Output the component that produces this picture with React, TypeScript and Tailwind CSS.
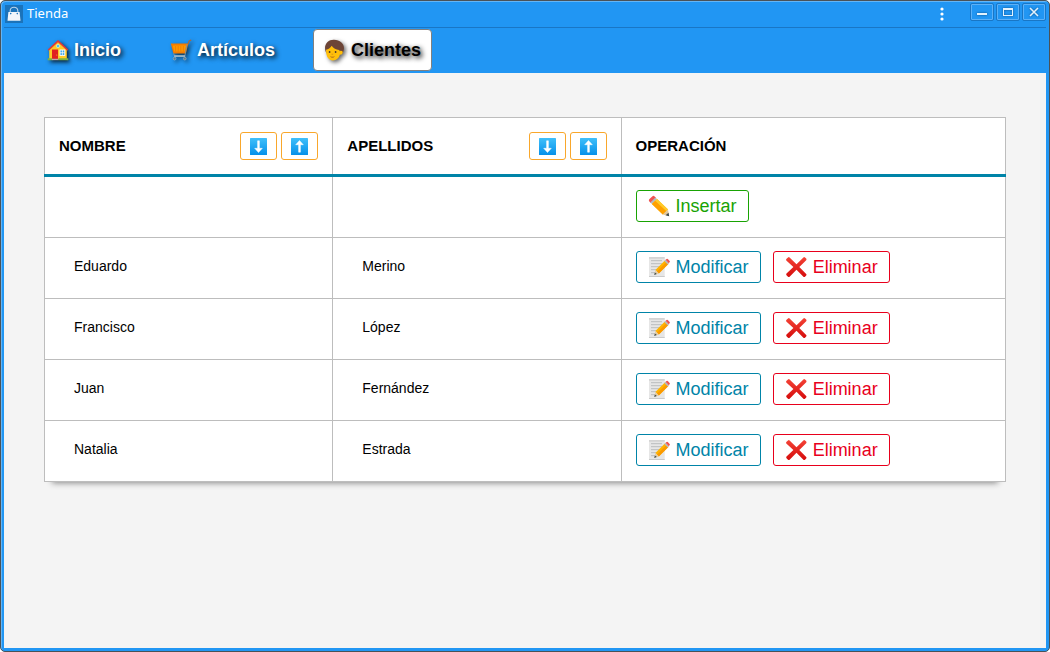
import type { ReactNode } from 'react';

const TitleBag = () => (
  <svg viewBox="0 0 18 18" className="size-[18px] shrink-0" aria-hidden="true">
    <rect width="18" height="18" fill="#1b73ba" />
    <path d="M5.2 9V5.5a3.8 3.3 0 0 1 7.6 0V9" fill="none" stroke="#b9d5ec" strokeWidth="1.1" />
    <path d="M3.4 7h11.2l.9 8.8h-13z" fill="#f1f5fa" />
    <circle cx="5.7" cy="8.6" r=".8" fill="#1b73ba" />
    <circle cx="12.3" cy="8.6" r=".8" fill="#1b73ba" />
  </svg>
);

const House = () => (
  <svg viewBox="0 0 22 22" className="size-[22px] shrink-0 drop-shadow-[2px_2px_2px_rgba(0,0,0,0.8)]" aria-hidden="true">
    <path d="M2.2 10.5 11 2.2l8.8 8.3v9.7H2.2z" fill="#ffca28" />
    <path d="M.8 10.6 11 .9l10.2 9.7-.9 1.2L11 3.2l-9.3 8.6z" fill="#e53935" />
    <rect x="5" y="10.5" width="6" height="9.5" fill="#e02020" />
    <circle cx="9.8" cy="16" r=".5" fill="#ffca28" />
    <circle cx="11" cy="7" r="1.7" fill="#4fc3f7" stroke="#fff3c4" strokeWidth=".6" />
    <rect x="13" y="11" width="4.8" height="5.4" fill="#3ba5e8" stroke="#fff" strokeWidth=".9" />
    <path d="M15.4 11v5M13 13.7h4.6" stroke="#fff" strokeWidth=".7" />
    <path d="M.7 19.3h4.5v1.9H.7zM11.5 19.3h9.8v1.9h-9.8z" fill="#7cb342" />
    <path d="M5 19.8h6.5v1.4H5z" fill="#bcaaa4" />
  </svg>
);

const Cart = () => (
  <svg viewBox="0 0 22 22" className="size-[22px] shrink-0 drop-shadow-[2px_2px_2px_rgba(0,0,0,0.65)]" aria-hidden="true">
    <path d="M.8 4.4h17.4l-2.3 10H3.4z" fill="#f57c00" />
    <path d="M2.8 6.6h13.4l-1.4 6H4.2z" fill="#ff9800" />
    <path d="M5.6 7v5.6M8.2 7v5.6M10.8 7v5.6M13.4 7v5.6" stroke="#ef7a00" strokeWidth=".8" />
    <path d="M18 5.4 19.3 1.8l1.9-.6" fill="none" stroke="#a9673c" strokeWidth="1.3" />
    <path d="M16.8 5.5 14.9 16.8H4.3l-.7-2.4" fill="none" stroke="#7d93a0" strokeWidth=".9" />
    <path d="M4.2 17.1h11" stroke="#cfd8dc" strokeWidth="1.1" />
    <circle cx="4.6" cy="19.6" r="1.4" fill="#607d8b" stroke="#b0bec5" strokeWidth=".5" />
    <circle cx="14.8" cy="19.6" r="1.4" fill="#607d8b" stroke="#b0bec5" strokeWidth=".5" />
  </svg>
);

const Person = () => (
  <svg viewBox="0 0 22 22" className="size-[22px] shrink-0 drop-shadow-[2px_2px_2px_rgba(0,0,0,0.6)]" aria-hidden="true">
    <path d="M1.6 12.6C-.6 5.6 3.9.6 10 .8c6.6 0 10.9 4.6 9.8 9.9-.3 1.9-1 3.3-2.3 4.3L3 14.6z" fill="#6d4537" />
    <path d="M2 10.8c2.3-.4 4.3-1.9 5.7-4 1.8 2.4 4.3 3.9 7.4 4.2l.8 1.2c1.2-1 3.2-.2 2.8 1.5-.3 1.4-1.6 2.2-2.8 1.9-.9 3.6-3.6 5.8-7 5.8-4.2 0-6.9-3.7-6.9-10.6z" fill="#ffbf0a" />
    <ellipse cx="5.6" cy="13" rx=".9" ry="1.1" fill="#46342d" />
    <ellipse cx="11.6" cy="13" rx=".9" ry="1.1" fill="#46342d" />
    <path d="M6.1 17.2c1.5.8 3.2.8 4.7 0-.8 1.8-3.9 1.8-4.7 0z" fill="#8d4a25" />
    <path d="M7.5 15.2h1.7" stroke="#d58c14" strokeWidth=".8" />
  </svg>
);

const SortArrow = ({ up = false }: { up?: boolean }) => (
  <svg viewBox="0 0 17 17" className="size-[17px]" aria-hidden="true">
    <defs>
      <linearGradient id="key" x1="0" y1="0" x2="0" y2="1">
        <stop offset="0" stopColor="#40c0fa" />
        <stop offset="1" stopColor="#0590ea" />
      </linearGradient>
    </defs>
    <rect width="17" height="17" rx=".6" fill="url(#key)" />
    <path
      d={up ? 'M8.5 2.5 12.3 6.7H9.4v7.5H7.6V6.7H4.7z' : 'M8.5 14.5 12.3 10.3H9.4V2.8H7.6v7.5H4.7z'}
      fill="#fff"
      stroke="#fff"
      strokeWidth=".5"
      strokeLinejoin="round"
    />
  </svg>
);

const Pencil = () => (
  <svg viewBox="0 0 22 22" className="size-[22px] shrink-0" aria-hidden="true">
    <path d="M1.2 4.3 4.5 1.2q1.2-.8 2.1.2L8 2.8 2.8 8 1.3 6.4q-1-1 0-2.1z" fill="#ef5350" />
    <path d="m7.4 2.4 1.6 1.5-5.1 5.2-1.6-1.6z" fill="#b4babd" />
    <path d="m9 3.9 11 10.6-5.2 5L3.9 9z" fill="#ffb300" />
    <path d="m7.4 5.5 11 10.6-3.6 3.4L3.9 9z" fill="#ffa000" />
    <path d="m7.2 5.7 1.9-1.8 11 10.6-1.6 1.8z" fill="#ffca28" />
    <path d="m20 14.4 1.2 6.8-6.5-1.7z" fill="#e2c79b" />
    <path d="m20.5 17.7.7 3.5-3.6-1z" fill="#37474f" />
  </svg>
);

const Memo = () => (
  <svg viewBox="0 0 22 22" className="size-[22px] shrink-0" aria-hidden="true">
    <path d="M1 1.4h15.7v19.4H1z" fill="#e6e6e6" />
    <path d="M1 1.2h15.7v1.2H1zM1 20h15.7v.9H1z" fill="#cacaca" />
    <path d="M3 4.7h11M3 7.7h11M3 10.7h9M3 13.7h6M3 16.7h4" stroke="#b5b8ba" strokeWidth=".9" />
    <path d="m16.9 4.5 3.5 3.4-9.6 9.5-3.4-3.3z" fill="#ffb300" />
    <path d="m18.5 6 1.9 1.9-9.6 9.5L9 15.6z" fill="#fb9900" />
    <path d="m7.4 14.1 3.4 3.3-4.4 1.4z" fill="#e5cda3" />
    <path d="m6.9 16.4 1.9 1.7-2.6.8z" fill="#37474f" />
    <path d="m16.3 5 1.2-1.2 3.4 3.4-1.2 1.2z" fill="#b4babd" />
    <path d="m17.5 3.8 1.1-.9q.6-.4 1.2.2l1.8 1.8q.6.6.1 1.2l-.9 1.1z" fill="#ef5350" />
  </svg>
);

const Cross = () => (
  <svg viewBox="0 0 22 22" className="size-[22px] shrink-0" aria-hidden="true">
    <defs>
      <linearGradient id="cross" x1="0" y1="0" x2="0" y2="1">
        <stop offset="0" stopColor="#f44336" />
        <stop offset="1" stopColor="#d50b0b" />
      </linearGradient>
    </defs>
    <path
      d="M1.3 3.1 3 1.4q.8-.7 1.6 0L11.5 8.3l6.9-6.9q.8-.7 1.6 0l1.2 1.2q.7.8 0 1.6L14.3 11l6.9 6.9q.7.8 0 1.6L20 20.7q-.8.7-1.6 0l-6.9-6.9-6.9 6.9q-.8.7-1.6 0l-1.5-1.5q-.7-.8 0-1.6L8.4 11 1.3 4.4q-.5-.6 0-1.3z"
      fill="url(#cross)"
    />
  </svg>
);

const navItem =
  'flex h-[42px] items-center gap-[5px] rounded border px-[10px] text-lg font-bold';

function NavLink({ icon, label, active = false }: { icon: ReactNode; label: string; active?: boolean }) {
  return (
    <a
      href="#"
      aria-current={active ? 'page' : undefined}
      className={
        active
          ? `${navItem} border-[#808080] bg-white text-black [text-shadow:2px_2px_5px_#000000]`
          : `${navItem} border-transparent text-white [text-shadow:2px_2px_5px_#000000]`
      }
    >
      {icon}
      {label}
    </a>
  );
}

function WindowButton({ label, children }: { label: string; children: ReactNode }) {
  return (
    <button
      type="button"
      aria-label={label}
      className="flex h-[18px] w-6 items-center justify-center rounded-xs border border-[#1976c5] shadow-[inset_0_0_0_1px_#5cb1f8]"
    >
      <svg viewBox="0 0 12 10" className="h-[10px] w-3 drop-shadow-[0_0_1px_#0d4f8b]" fill="none" stroke="#e3f2fd" aria-hidden="true">
        {children}
      </svg>
    </button>
  );
}

function HeaderCell({ label }: { label: string }) {
  return (
    <th scope="col" className="w-[30%] border border-b-3 border-[#bdbdbd] border-b-[#0084a8] px-[14px]">
      <div className="flex items-center justify-between">
        {label}
        <span className="flex gap-1">
          <SortButton label={`${label} descendente`} />
          <SortButton label={`${label} ascendente`} up />
        </span>
      </div>
    </th>
  );
}

function SortButton({ label, up = false }: { label: string; up?: boolean }) {
  return (
    <button
      type="button"
      aria-label={label}
      className="flex h-7 w-[37px] items-center justify-center rounded-[3px] border border-[#f9a72b]"
    >
      <SortArrow up={up} />
    </button>
  );
}

const action = 'flex h-8 items-center gap-[6px] rounded-[3px] border px-[11px] text-lg';
const cell = 'border border-[#bdbdbd]';

const clients = [
  { name: 'Eduardo', surname: 'Merino' },
  { name: 'Francisco', surname: 'López' },
  { name: 'Juan', surname: 'Fernández' },
  { name: 'Natalia', surname: 'Estrada' },
];

export default function App() {
  return (
    <div className="min-h-screen bg-white font-['Liberation_Sans',Arial,sans-serif] text-black">
      <div className="flex min-h-screen flex-col rounded-[5px] border border-[#4a5257] bg-[#2196f3] px-[3px] pb-[3px] shadow-[inset_1px_1px_0_#64b5f6]">
        <header className="flex h-[27px] items-center border-b border-[#1976c5] pl-px">
          <TitleBag />
          <h1 className="ml-1 font-['Noto_Sans',sans-serif] text-[13px] text-white">Tienda</h1>
          <button type="button" aria-label="Menú" className="ml-auto mr-6 flex h-5 w-2 items-center justify-center">
            <svg viewBox="0 0 4 14" className="h-[14px] w-1" fill="#fff" aria-hidden="true">
              <circle cx="2" cy="2" r="1.6" />
              <circle cx="2" cy="7" r="1.6" />
              <circle cx="2" cy="12" r="1.6" />
            </svg>
          </button>
          <div className="mb-1 flex gap-[2px]">
            <WindowButton label="Minimizar">
              <path d="M1 7h10" strokeWidth="2" />
            </WindowButton>
            <WindowButton label="Maximizar">
              <path d="M1 2h10" strokeWidth="2" />
              <rect x="1.5" y="1.5" width="9" height="7" />
            </WindowButton>
            <WindowButton label="Cerrar">
              <path d="m2 1 8 8M10 1 2 9" strokeWidth="1.6" />
            </WindowButton>
          </div>
        </header>

        <nav className="flex h-[45px] items-start gap-[27px] pl-8 pt-px">
          <NavLink icon={<House />} label="Inicio" />
          <NavLink icon={<Cart />} label="Artículos" />
          <NavLink icon={<Person />} label="Clientes" active />
        </nav>

        <main className="flex-1 bg-[#f4f4f4] px-10 pb-10 pt-11">
          <table className="w-full table-fixed border-collapse bg-white text-left text-sm shadow-[0_9px_6px_-8px_#888888]">
            <thead>
              <tr className="h-[58px] text-[15px]">
                <HeaderCell label="NOMBRE" />
                <HeaderCell label="APELLIDOS" />
                <th scope="col" className="w-[40%] border border-b-3 border-[#bdbdbd] border-b-[#0084a8] px-[14px]">
                  OPERACIÓN
                </th>
              </tr>
            </thead>
            <tbody>
              <tr className="h-[62px]">
                <td className={cell} />
                <td className={cell} />
                <td className={`${cell} px-[14px] pb-[3px]`}>
                  <div className="flex">
                    <button type="button" className={`${action} border-[#18a303] text-[#18a303]`}>
                      <Pencil />
                      Insertar
                    </button>
                  </div>
                </td>
              </tr>
              {clients.map(({ name, surname }) => (
                <tr key={name} className="h-[61px]">
                  <td className={`${cell} px-[29px] pb-1`}>{name}</td>
                  <td className={`${cell} px-[29px] pb-1`}>{surname}</td>
                  <td className={`${cell} px-[14px] pb-[2px]`}>
                    <div className="flex gap-3">
                      <button type="button" className={`${action} border-[#0084a8] text-[#0084a8]`}>
                        <Memo />
                        Modificar
                      </button>
                      <button type="button" className={`${action} border-[#e8001c] text-[#e8001c]`}>
                        <Cross />
                        Eliminar
                      </button>
                    </div>
                  </td>
                </tr>
              ))}
            </tbody>
          </table>
        </main>
      </div>
    </div>
  );
}
